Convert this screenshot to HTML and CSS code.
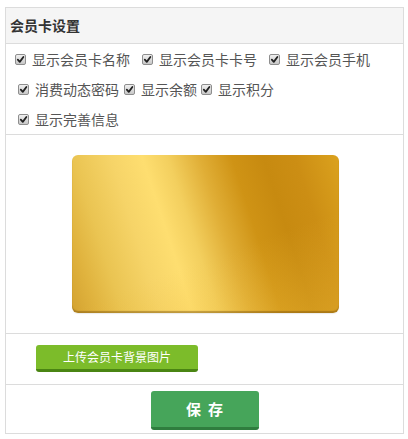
FILE: index.html
```html
<!DOCTYPE html>
<html lang="zh-CN">
<head>
<meta charset="utf-8">
<link rel="stylesheet" href="styles.css">
</head>
<body>
<div class="panel">
  <div class="panel-head">会员卡设置</div>
  <div class="opts">
    <div class="opt-row row1">
      <label class="opt"><span class="cb"><svg viewBox="0 0 10 10"><path d="M2 5.2 L4.2 7.6 L8.2 2.2" /></svg></span>显示会员卡名称</label>
      <label class="opt wide"><span class="cb"><svg viewBox="0 0 10 10"><path d="M2 5.2 L4.2 7.6 L8.2 2.2" /></svg></span>显示会员卡卡号</label>
      <label class="opt wide"><span class="cb"><svg viewBox="0 0 10 10"><path d="M2 5.2 L4.2 7.6 L8.2 2.2" /></svg></span>显示会员手机</label>
    </div>
    <div class="opt-row row2">
      <label class="opt"><span class="cb"><svg viewBox="0 0 10 10"><path d="M2 5.2 L4.2 7.6 L8.2 2.2" /></svg></span>消费动态密码</label>
      <label class="opt tight"><span class="cb"><svg viewBox="0 0 10 10"><path d="M2 5.2 L4.2 7.6 L8.2 2.2" /></svg></span>显示余额</label>
      <label class="opt tighter"><span class="cb"><svg viewBox="0 0 10 10"><path d="M2 5.2 L4.2 7.6 L8.2 2.2" /></svg></span>显示积分</label>
    </div>
    <div class="opt-row row2">
      <label class="opt"><span class="cb"><svg viewBox="0 0 10 10"><path d="M2 5.2 L4.2 7.6 L8.2 2.2" /></svg></span>显示完善信息</label>
    </div>
  </div>
  <div class="card-wrap">
    <div class="card"></div>
  </div>
  <div class="upload-wrap">
    <button class="btn-upload">上传会员卡背景图片</button>
  </div>
  <div class="save-wrap">
    <button class="btn-save">保&nbsp;&nbsp;存</button>
  </div>
</div>
</body>
</html>
```
FILE: styles.css
```css
html, body {
  margin: 0;
  padding: 0;
  background: #fff;
}
body {
  font-family: "Noto Sans CJK SC", "Microsoft YaHei", sans-serif;
  color: #555;
}
.panel {
  margin: 7px 0 0 5px;
  width: 397px;
  border: 1px solid #dcdcdc;
}
.panel-head {
  height: 35px;
  line-height: 35px;
  padding-left: 4px;
  background: #f5f5f5;
  border-bottom: 1px solid #dcdcdc;
  font-size: 14px;
  font-weight: bold;
  color: #333;
}
.opts {
  height: 90px;
  border-bottom: 1px solid #dcdcdc;
}
.opt-row {
  display: flex;
  align-items: center;
  height: 30px;
}
.row1 { padding-left: 9px; }
.row2 { padding-left: 12px; }
.opt {
  display: flex;
  align-items: center;
  font-size: 14px;
  line-height: 30px;
  color: #555;
}
.opt.wide { margin-left: 12px; }
.opt.tight { margin-left: 5px; }
.opt.tighter { margin-left: 4px; }
.cb {
  box-sizing: border-box;
  width: 11px;
  height: 11px;
  margin-right: 6px;
  border: 1px solid #8e8e8e;
  border-radius: 2px;
  background: linear-gradient(#f0f0f0, #c8c8c8);
  display: flex;
  align-items: center;
  justify-content: center;
}
.cb svg {
  width: 9px;
  height: 9px;
  fill: none;
  stroke: #222;
  stroke-width: 2;
  stroke-linecap: round;
  stroke-linejoin: round;
}
.card-wrap {
  height: 198px;
  display: flex;
  align-items: center;
  justify-content: center;
  border-bottom: 1px solid #dcdcdc;
}
.card {
  width: 267px;
  height: 158px;
  margin-left: 2px;
  border-radius: 6px;
  box-shadow: inset 0 -2px 1px rgba(120, 80, 10, 0.45), 0 1px 1px rgba(0,0,0,0.08);
  background:
    linear-gradient(160deg, rgba(255,255,255,0) 60%, rgba(240,190,60,0.35) 100%),
    linear-gradient(72deg,
      #d3a230 0%,
      #e0b33e 8%,
      #eac452 16%,
      #f6d468 28%,
      #fede70 38%,
      #f3cf5e 46%,
      #e0ae36 56%,
      #cf9315 66%,
      #c78a10 76%,
      #cc8e14 86%,
      #dba21e 100%);
}
.upload-wrap {
  height: 51px;
  border-bottom: 1px solid #dcdcdc;
  box-sizing: border-box;
  padding: 11px 0 0 30px;
}
.btn-upload {
  display: block;
  width: 162px;
  height: 27px;
  border: 0;
  border-bottom: 3px solid #4a8513;
  border-radius: 3px;
  background: #7cbc2a;
  color: #fff;
  font-family: inherit;
  font-size: 12px;
  line-height: 24px;
  padding: 0;
}
.save-wrap {
  height: 48px;
  box-sizing: border-box;
  padding-top: 6px;
  display: flex;
  justify-content: center;
}
.btn-save {
  width: 108px;
  height: 39px;
  border: 0;
  border-bottom: 3px solid #2f7d3e;
  border-radius: 3px;
  background: #46a55a;
  color: #fff;
  font-family: inherit;
  font-size: 15px;
  font-weight: bold;
  line-height: 36px;
  padding: 0;
}
```
